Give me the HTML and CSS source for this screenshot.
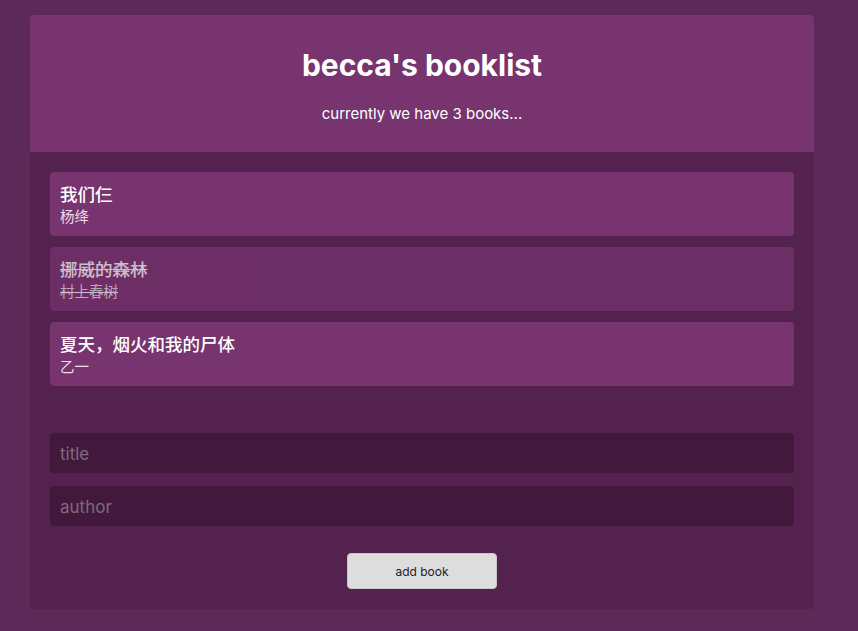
FILE: index.html
```html
<!DOCTYPE html>
<html lang="zh">
<head>
<meta charset="utf-8">
<title>becca's booklist</title>
<link rel="stylesheet" href="styles.css">
</head>
<body>
<div class="app">
  <header class="header">
    <h1 class="title">becca's booklist</h1>
    <p class="count">currently we have 3 books...</p>
  </header>
  <main class="content">
    <ul class="books">
      <li class="book"><div class="book-title">我们仨</div><div class="book-author">杨绛</div></li>
      <li class="book done"><div class="book-title">挪威的森林</div><div class="book-author">村上春树</div></li>
      <li class="book"><div class="book-title">夏天，烟火和我的尸体</div><div class="book-author">乙一</div></li>
    </ul>
    <form class="form">
      <input class="field" type="text" placeholder="title">
      <input class="field" type="text" placeholder="author">
      <button class="submit" type="button">add book</button>
    </form>
  </main>
</div>
</body>
</html>
```
FILE: styles.css
```css
html, body {
  margin: 0;
  padding: 0;
  background: #5c2a58;
  font-family: Inter, "Noto Sans CJK SC", sans-serif;
  color: #fff;
}
body {
  padding: 15px 44px 22px 30px;
}
.app {
  width: 784px;
  background: #53224f;
  border-radius: 4px;
  overflow: hidden;
}
.header {
  background: #77346f;
  height: 137px;
  box-sizing: border-box;
  padding-top: 32px;
  text-align: center;
}
.title {
  margin: 0;
  font-size: 30px;
  line-height: 36px;
  font-weight: 700;
}
.count {
  margin: 21px 0 0;
  font-size: 15px;
  line-height: 20px;
}
.content {
  padding: 20px 20px 20px;
}
.books {
  list-style: none;
  margin: 0;
  padding: 0;
  display: flex;
  flex-direction: column;
  gap: 11px;
}
.book {
  background: #77346f;
  border-radius: 4px;
  padding: 10px 10px;
  height: 64px;
  box-sizing: border-box;
}
.book-title {
  font-size: 17.5px;
  line-height: 25px;
  font-weight: 500;
}
.book-author {
  font-size: 14.5px;
  line-height: 19px;
  color: #ecdfea;
}
.book.done {
  opacity: 0.7;
  text-decoration: line-through;
}
.form {
  margin-top: 47px;
  display: flex;
  flex-direction: column;
  gap: 13px;
  align-items: center;
}
.field {
  width: 100%;
  box-sizing: border-box;
  height: 40px;
  border: none;
  border-radius: 4px;
  background: #42193d;
  padding: 1px 10px 0;
  font-family: Inter, sans-serif;
  font-size: 17px;
  color: #fff;
  outline: none;
}
.field::placeholder {
  color: #7f6b7c;
}
.submit {
  margin-top: 14px;
  width: 150px;
  height: 36px;
  background: #dddddd;
  border: 1px solid #c8c8c8;
  border-radius: 4px;
  font-family: Inter, sans-serif;
  font-size: 12px;
  color: #222;
}
```
